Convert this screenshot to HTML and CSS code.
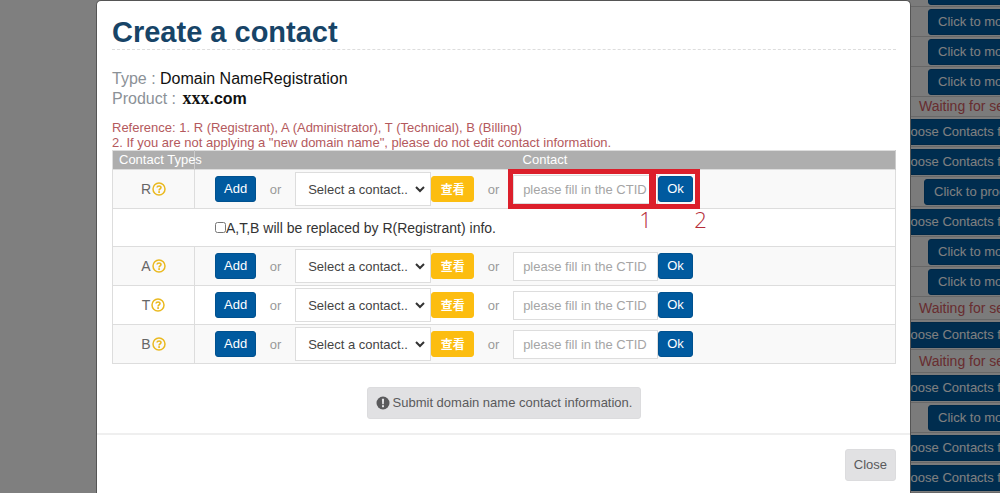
FILE: index.html
```
<!DOCTYPE html>
<html lang="en">
  <head>
    <meta charset="UTF-8">
    <title>Create a contact</title>
    <link rel="stylesheet" href="styles.css">
  </head>
  <body>
    <svg class="sprite" aria-hidden="true">
      <symbol id="icon-question" viewBox="0 0 14 14">
        <circle cx="7" cy="7" r="6" fill="none" stroke="currentColor" stroke-width="1.5"/>
        <path d="M5 5.5C5.200 3.500 9 3.400 9 5.500C9 6.900 7.100 6.800 7.100 8.400" fill="none" stroke="currentColor" stroke-width="1.600"/>
        <rect x="6.200" y="9.200" width="1.800" height="1.700" fill="currentColor"/>
      </symbol>
      <symbol id="icon-exclamation" viewBox="0 0 14 14">
        <circle cx="7" cy="7" r="6.500" fill="currentColor"/>
        <path d="M5.900 2.800H8.100L7.800 8.200H6.200Z" fill="#e1e1e3"/>
        <rect x="6" y="9.200" width="2" height="2" fill="#e1e1e3"/>
      </symbol>
    </svg>

    <ul class="orders">
      <li><button class="btn btn-modify">Click to modify</button></li>
      <li><button class="btn btn-modify">Click to modify</button></li>
      <li><button class="btn btn-modify">Click to modify</button></li>
      <li><button class="btn btn-modify">Click to modify</button></li>
      <li class="waiting first">Waiting for service</li>
      <li><button class="btn btn-choose">Choose Contacts for</button></li>
      <li><button class="btn btn-choose">Choose Contacts for</button></li>
      <li><button class="btn btn-process">Click to process</button></li>
      <li><button class="btn btn-choose">Choose Contacts for</button></li>
      <li><button class="btn btn-modify">Click to modify</button></li>
      <li><button class="btn btn-modify">Click to modify</button></li>
      <li class="waiting">Waiting for service</li>
      <li><button class="btn btn-choose">Choose Contacts for</button></li>
      <li class="waiting">Waiting for service</li>
      <li><button class="btn btn-choose">Choose Contacts for</button></li>
      <li><button class="btn btn-modify">Click to modify</button></li>
      <li><button class="btn btn-choose">Choose Contacts for</button></li>
      <li><button class="btn btn-choose">Choose Contacts for</button></li>
    </ul>
    <div class="backdrop"></div>

    <div class="modal" role="dialog" aria-labelledby="modalTitle">
      <div class="modal-body">
        <h1 id="modalTitle">Create a contact</h1>
        <div class="info">
          <div>Type : <span class="value">Domain NameRegistration</span></div>
          <div>Product : <b class="value domain"><span class="serif">xxx</span>.com</b></div>
        </div>
        <div class="reference">
          Reference: 1. R (Registrant), A (Administrator), T (Technical), B (Billing)<br>
          2. If you are not applying a "new domain name", please do not edit contact information.
        </div>
        <table class="contacts">
          <thead>
            <tr><th class="type">Contact Types</th><th>Contact</th></tr>
          </thead>
          <tbody>
            <tr class="odd">
              <td class="type"><span>R<svg class="icon"><use href="#icon-question"/></svg></span></td>
              <td>
                <div class="fields">
                  <button class="btn">Add</button>
                  <span class="or">or</span>
                  <select aria-label="R contact"><option>Select a contact..</option></select>
                  <button class="btn btn-view">查看</button>
                  <span class="or">or</span>
                  <div class="ctid">
                    <input type="text" aria-label="R CTID" placeholder="please fill in the CTID">
                    <button class="btn">Ok</button>
                    <div class="mark mark-input"><span>1</span></div>
                    <div class="mark mark-ok"><span>2</span></div>
                  </div>
                </div>
              </td>
            </tr>
            <tr>
              <td colspan="2" class="replace">
                <label><input type="checkbox">A,T,B will be replaced by R(Registrant) info.</label>
              </td>
            </tr>
            <tr class="odd">
              <td class="type"><span>A<svg class="icon"><use href="#icon-question"/></svg></span></td>
              <td>
                <div class="fields">
                  <button class="btn">Add</button>
                  <span class="or">or</span>
                  <select aria-label="A contact"><option>Select a contact..</option></select>
                  <button class="btn btn-view">查看</button>
                  <span class="or">or</span>
                  <div class="ctid">
                    <input type="text" aria-label="A CTID" placeholder="please fill in the CTID">
                    <button class="btn">Ok</button>
                  </div>
                </div>
              </td>
            </tr>
            <tr>
              <td class="type"><span>T<svg class="icon"><use href="#icon-question"/></svg></span></td>
              <td>
                <div class="fields">
                  <button class="btn">Add</button>
                  <span class="or">or</span>
                  <select aria-label="T contact"><option>Select a contact..</option></select>
                  <button class="btn btn-view">查看</button>
                  <span class="or">or</span>
                  <div class="ctid">
                    <input type="text" aria-label="T CTID" placeholder="please fill in the CTID">
                    <button class="btn">Ok</button>
                  </div>
                </div>
              </td>
            </tr>
            <tr class="odd">
              <td class="type"><span>B<svg class="icon"><use href="#icon-question"/></svg></span></td>
              <td>
                <div class="fields">
                  <button class="btn">Add</button>
                  <span class="or">or</span>
                  <select aria-label="B contact"><option>Select a contact..</option></select>
                  <button class="btn btn-view">查看</button>
                  <span class="or">or</span>
                  <div class="ctid">
                    <input type="text" aria-label="B CTID" placeholder="please fill in the CTID">
                    <button class="btn">Ok</button>
                  </div>
                </div>
              </td>
            </tr>
          </tbody>
        </table>
        <div class="submit">
          <button class="btn btn-gray"><svg class="icon"><use href="#icon-exclamation"/></svg>Submit domain name contact information.</button>
        </div>
      </div>
      <div class="modal-footer">
        <button class="btn btn-gray">Close</button>
      </div>
    </div>
  </body>
</html>
```
FILE: styles.css
```
* {
  box-sizing: border-box;
}
html, body {
  height: 100%;
}
body {
  margin: 0;
  overflow: hidden;
  background: #fff;
  font-family: "Liberation Sans", Arial, sans-serif;
  font-size: 13px;
  color: #333;
}
button, input, select {
  font: inherit;
  margin: 0;
}
.sprite {
  display: none;
}
.icon {
  width: 14px;
  height: 14px;
  flex: none;
}

.btn {
  height: 26px;
  padding: 0 8px;
  border: 1px solid #00518f;
  border-radius: 3px;
  background: #005a9f;
  color: #fff;
  line-height: 20px;
  white-space: nowrap;
}
.btn-view {
  width: 43px;
  padding: 0;
  border-color: #fcbd10;
  background: #fcbd10;
  font-family: "Noto Sans CJK TC", sans-serif;
  font-size: 12px;
  font-weight: bold;
}
.btn-gray {
  display: flex;
  align-items: center;
  gap: 3px;
  height: 32px;
  border-color: #dcdcde;
  background: #e1e1e3;
  color: #5a5a5c;
}

/* page behind the modal */
.orders {
  width: 130px;
  margin: -23px 0 0 auto;
  padding: 0;
  list-style: none;
  background: #f6f6f6;
}
.orders li {
  height: 30px;
  padding-top: 2px;
  border-bottom: 1px solid #d0d0d0;
  white-space: nowrap;
}
.orders .btn {
  padding: 0 9px;
}
.btn-modify {
  margin-left: 58px;
}
.btn-process {
  margin-left: 54px;
}
.btn-choose {
  margin-left: 14px;
}
.orders .waiting {
  height: 23px;
  padding: 0 0 0 49px;
  line-height: 22px;
  font-size: 14px;
  color: #d05a60;
}
.orders .waiting.first {
  height: 20px;
  line-height: 19px;
}
.backdrop {
  position: fixed;
  inset: 0;
  background: rgba(0, 0, 0, 0.5);
}

.modal {
  position: absolute;
  top: 0;
  left: 96px;
  right: 89px;
  min-height: 100%;
  border: 1px solid #555;
  border-bottom: 0;
  border-radius: 5px 5px 0 0;
  background: #fff;
}
.modal-body {
  padding: 14px 14px 14px 15px;
}
h1 {
  margin: 0 0 19px;
  border-bottom: 1px dashed #ddd;
  font-size: 29px;
  line-height: 34px;
  color: #174467;
}
.info {
  margin-bottom: 11px;
  font-size: 16px;
  line-height: 20px;
  color: #8b9197;
}
.value {
  color: #111;
}
.domain {
  margin-left: 2px;
}
.serif {
  font-family: "Liberation Serif", "Times New Roman", serif;
  font-size: 18px;
  line-height: 16px;
}
.reference {
  line-height: 15px;
  color: #b4595d;
}

.contacts {
  width: 100%;
  table-layout: fixed;
  border-collapse: collapse;
  border: 1px solid #ddd;
}
.contacts th {
  height: 18px;
  padding: 0;
  border-right: 1px solid #ccc;
  background: #aeaeae;
  color: #fff;
  font-weight: normal;
  line-height: 18px;
  white-space: nowrap;
}
.contacts th.type {
  width: 82px;
  padding-left: 6px;
  text-align: left;
}
.contacts td {
  height: 39px;
  padding: 0 20px;
  border: 1px solid #ddd;
}
.contacts td.type {
  padding: 0;
  font-size: 14px;
  color: #666;
}
.type span {
  display: flex;
  align-items: center;
  justify-content: center;
  gap: 1px;
}
.type .icon {
  color: #eab91f;
}
.odd {
  background: #f9f9f9;
}
.fields, .ctid {
  display: flex;
  align-items: center;
}
.or {
  width: 39px;
  text-align: center;
  color: #999;
}
select {
  width: 136px;
  height: 34px;
  padding: 0 0 0 12px;
  border: 1px solid #ddd;
  border-radius: 0;
  appearance: none;
  background: #fff url("data:image/svg+xml,%3Csvg xmlns='http://www.w3.org/2000/svg' width='10' height='7'%3E%3Cpath d='M1 1l4 4 4-4' fill='none' stroke='%23333' stroke-width='2'/%3E%3C/svg%3E") no-repeat right 5px center;
  color: #444;
}
.ctid {
  position: relative;
}
.ctid input {
  width: 145px;
  height: 29px;
  padding: 0 9px;
  border: 1px solid #ddd;
  background: #fff;
}
.ctid input::placeholder {
  color: #a5a5a5;
}

/* numbered steps drawn over the first row */
.mark {
  position: absolute;
  top: -6px;
  bottom: -5px;
  border: 5px solid #dc1f2b;
}
.mark-input {
  left: -5px;
  right: 39px;
}
.mark-ok {
  left: 138px;
  right: -7px;
}
.mark span {
  position: absolute;
  top: 100%;
  right: -3px;
  font-family: "Open Sans", "Noto Sans", sans-serif;
  font-size: 22px;
  font-weight: 300;
  line-height: 30px;
  color: #b52c38;
}
.mark-ok span {
  right: -12px;
}
.contacts td.replace {
  height: 38px;
  padding-left: 102px;
  font-size: 14px;
}
.replace label {
  display: flex;
  align-items: center;
}
.replace input {
  width: 11px;
  height: 11px;
}

.submit {
  display: flex;
  justify-content: center;
  margin-top: 23px;
}
.modal-footer {
  display: flex;
  justify-content: flex-end;
  padding: 14px 14px 12px;
  border-top: 2px solid #efefef;
}
```
